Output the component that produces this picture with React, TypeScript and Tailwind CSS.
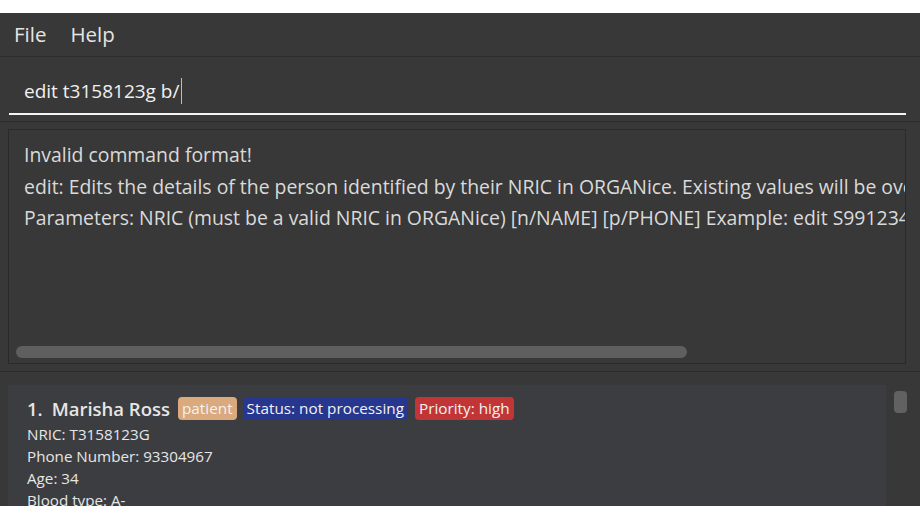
const font = { fontFamily: '"Open Sans", "Noto Sans", sans-serif' };

const Tag = ({ label, className }: { label: string; className: string }) => (
  <span className={`inline-flex items-center h-[23px] px-[4px] rounded-[4px] text-[15.3px] leading-none text-[#f2f2f2] ${className}`}>
    {label}
  </span>
);

export default function App() {
  return (
    <div className="w-[920px] h-[506px] overflow-hidden bg-white flex flex-col" style={font}>
      <div className="h-[13px] shrink-0 bg-white" />
      <div className="flex-1 flex flex-col bg-[#383838] min-h-0">
        {/* menu bar */}
        <div className="h-[44px] shrink-0 flex items-center gap-[24px] px-[14px] text-[20.5px] text-[#e4e4e4] border-b border-[#2c2c2c]">
          <span>File</span>
          <span>Help</span>
        </div>

        {/* command box */}
        <div className="h-[65px] shrink-0 pl-[9px] pr-[14px] pt-[21px] border-b border-[#2c2c2c]">
          <div className="h-[37px] border-b-2 border-[#f4f4f4] pl-[15px] flex items-start text-[19px] text-[#f0f0f0] leading-[26px]">
            <span>edit t3158123g b/</span>
            <span className="inline-block w-px h-[26px] bg-[#bdbdbd] ml-[2px]" />
          </div>
        </div>

        {/* result display */}
        <div className="h-[250px] shrink-0 px-[8px] py-[7px] border-b border-[#2c2c2c] pr-[14px]">
          <div className="h-full border border-[#2a2a2a] flex flex-col">
            <div className="flex-1 overflow-hidden pl-[15px] pt-[9px] text-[19.4px] leading-[31.5px] text-[#dadada] whitespace-nowrap">
              <div>Invalid command format!</div>
              <div>edit: Edits the details of the person identified by their NRIC in ORGANice. Existing values will be overwritten by the input values.</div>
              <div>Parameters: NRIC (must be a valid NRIC in ORGANice) [n/NAME] [p/PHONE] Example: edit S9912345A n/John Doe</div>
            </div>
            <div className="h-[18px] shrink-0 pl-[7px] pt-[1px]">
              <div className="w-[671px] h-[12px] rounded-full bg-[#5f5f5f]" />
            </div>
          </div>
        </div>

        {/* person list */}
        <div className="flex-1 min-h-0 flex pt-[13px] pl-[8px]">
          <div className="w-[878px] bg-[#3c3d40] pl-[19px] pt-[10px] text-[#e6e6e6]">
            <div className="flex items-center gap-[6px]">
              <span className="text-[18.5px] font-semibold mr-[2px]">
                1.<span className="ml-[9px]">Marisha Ross</span>
              </span>
              <Tag label="patient" className="bg-[#daa97d]" />
              <Tag label="Status: not processing" className="bg-[#27368f]" />
              <Tag label="Priority: high" className="bg-[#c13536] ml-[1px]" />
            </div>
            <div className="mt-0 text-[15.2px] leading-[22px]">
              <div>NRIC: T3158123G</div>
              <div>Phone Number: 93304967</div>
              <div>Age: 34</div>
              <div>Blood type: A-</div>
            </div>
          </div>
          <div className="w-[34px] flex justify-center pt-[6px]">
            <div className="w-[13px] h-[22px] rounded-[4px] bg-[#616161] -ml-[6px]" />
          </div>
        </div>
      </div>
    </div>
  );
}
